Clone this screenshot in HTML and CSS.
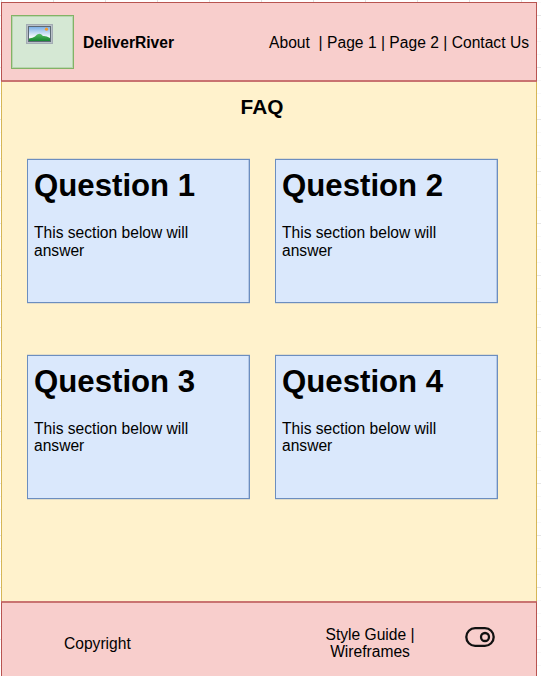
FILE: index.html
```html
<!DOCTYPE html>
<html lang="en">
<head>
<meta charset="utf-8">
<title>DeliverRiver FAQ</title>
<link rel="stylesheet" href="styles.css">
</head>
<body>
<div class="page">
  <header class="header">
    <div class="logo">
      <svg width="28" height="21" viewBox="0 0 28 21">
        <defs>
          <linearGradient id="sky" x1="0" y1="0" x2="0" y2="1"><stop offset="0" stop-color="#7eb0e6"/><stop offset=".7" stop-color="#f4f9fd"/></linearGradient>
          <linearGradient id="hill" x1="0" y1="0" x2="0" y2="1"><stop offset="0" stop-color="#55bd62"/><stop offset="1" stop-color="#168632"/></linearGradient>
        </defs>
        <rect x=".5" y=".5" width="26" height="19" fill="#b9c1c8" stroke="#a3acb3"/>
        <rect x="2" y="2" width="23" height="16" fill="#5d6975"/>
        <rect x="3" y="3" width="21" height="14" fill="url(#sky)"/>
        <path d="M3 14.5 Q7 14 9 12.5 Q13 7.5 17 12 Q20 11.5 24 14 V17 H3Z" fill="url(#hill)"/>
        <circle cx="20.5" cy="5.2" r="1.6" fill="#f39a32"/>
      </svg>
    </div>
    <strong class="brand">DeliverRiver</strong>
    <nav class="nav">About&nbsp; | Page 1 | Page 2 | Contact Us</nav>
  </header>
  <main class="main">
    <h2 class="title">FAQ</h2>
    <div class="cards">
      <section class="card"><h1>Question 1</h1><p>This section below will answer</p></section>
      <section class="card"><h1>Question 2</h1><p>This section below will answer</p></section>
      <section class="card lower"><h1>Question 3</h1><p>This section below will answer</p></section>
      <section class="card lower"><h1>Question 4</h1><p>This section below will answer</p></section>
    </div>
  </main>
  <footer class="footer">
    <span class="copyright">Copyright</span>
    <span class="links">Style Guide |<br>Wireframes</span>
    <svg class="toggle" width="30" height="20" viewBox="0 0 30 20" fill="none" stroke="#111" stroke-width="2.3">
      <rect x="1.3" y="1.2" width="27.4" height="17.6" rx="8.8"/>
      <circle cx="20" cy="10" r="4"/>
    </svg>
  </footer>
</div>
</body>
</html>
```
FILE: styles.css
```css
* { box-sizing: border-box; }
body {
  margin: 0;
  height: 676px;
  overflow: hidden;
  padding: 2px 0 0 1px;
  font: 15.6px/18px "Liberation Sans", Arial, sans-serif;
  color: #000;
  background:
    repeating-linear-gradient(#e6e6e6 0 1px, transparent 1px 52px) 0 15px,
    repeating-linear-gradient(#f7f7f7 0 1px, transparent 1px 13px) 0 2px,
    repeating-linear-gradient(90deg, #e0e0e0 0 1px, transparent 1px 52px) 1px 0,
    #fff;
}
.page { width: 536px; height: 675px; display: flex; flex-direction: column; }
.header {
  height: 80px;
  display: flex;
  align-items: flex-start;
  background: #f8cecc;
  border: 1px solid #b85450;
  border-bottom: 2px solid #c97370;
  padding: 12px 7px 0 9px;
}
.logo {
  width: 63px;
  height: 54px;
  background: #d5e8d4;
  border: 1px solid #82b366;
  box-shadow: inset 0 0 0 1px #82b36655;
  padding: 8px 0 0 14px;
}
.logo svg { display: block; }
.brand { margin: 19px 0 0 9px; }
.nav { margin: 19px 0 0 auto; white-space: nowrap; letter-spacing: .02px; }
.main {
  height: 520px;
  background: #fff2cc;
  border: solid #d6b656;
  border-width: 0 1px;
  padding: 13px 0 0 25px;
}
.title { width: 470px; margin: 0; text-align: center; font-size: 20.8px; line-height: 24px; }
.cards { display: grid; grid-template-columns: 223px 223px; gap: 52px 25px; margin-top: 40px; }
.card {
  height: 144px;
  background: #dae8fc;
  border: 1px solid #6c8ebf;
  box-shadow: inset -1px 0 #6c8ebf55, 0 -1px #6c8ebf33, 0 1px #6c8ebf33;
  padding: 8px 6px;
}
.card h1 { margin: 0; font-size: 31.2px; line-height: 36px; white-space: nowrap; }
.card p { width: 180px; margin: 20px 0 0; }
.lower p { line-height: 17px; }
.footer {
  height: 76px;
  display: flex;
  background: #f8cecc;
  border: 1px solid #b85450;
  border-top: 2px solid #c97370;
}
.copyright { margin: 32px 0 0 62px; width: 68px; }
.links { margin: 23px 0 0 188px; width: 100px; text-align: center; line-height: 17px; }
.toggle { margin: 24px 0 0 45px; }
```
